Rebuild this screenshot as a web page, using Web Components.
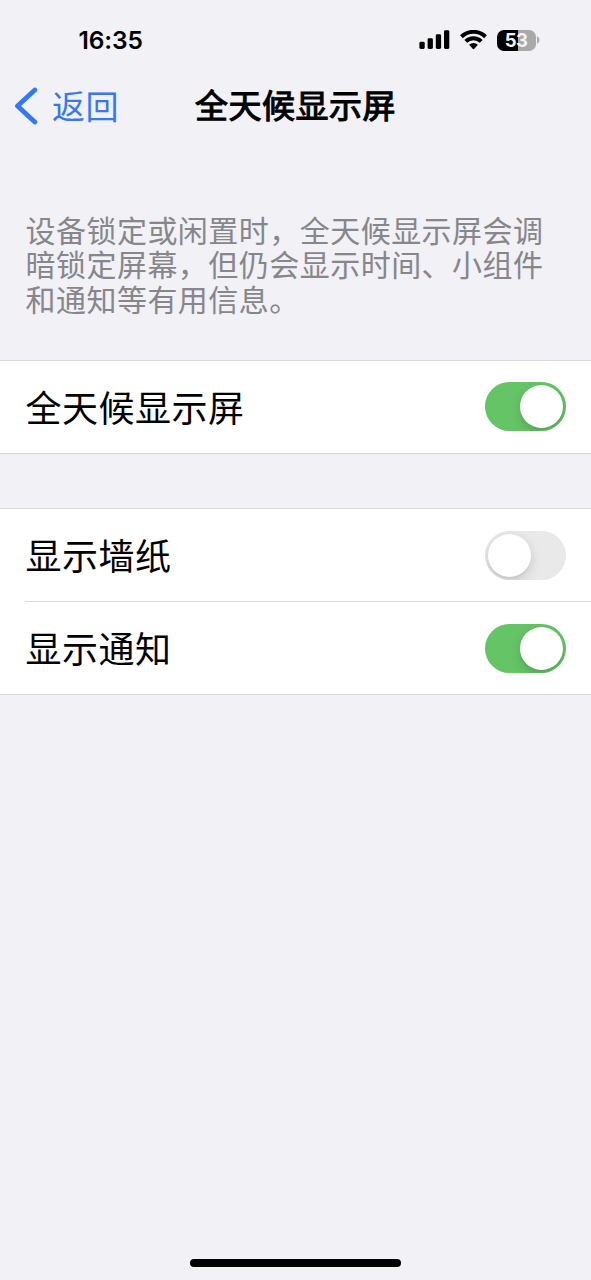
<!DOCTYPE html>
<html lang="zh-CN">
<head>
<meta charset="utf-8">
<title>全天候显示屏</title>
<style>
html, body { margin: 0; height: 100%; background: #f1f1f6; }
body { overflow: hidden; font-family: Inter, "Noto Sans CJK SC", sans-serif; }
</style>
</head>
<body>
<settings-page>
  <status-bar time="16:35" level="53"></status-bar>
  <nav-bar back="返回">全天候显示屏</nav-bar>
  <section-note>设备锁定或闲置时，全天候显示屏会调
暗锁定屏幕，但仍会显示时间、小组件
和通知等有用信息。</section-note>
  <cell-group><setting-cell on>全天候显示屏</setting-cell></cell-group>
  <cell-group><setting-cell>显示墙纸</setting-cell><setting-cell on>显示通知</setting-cell></cell-group>
  <home-indicator slot="bottom"></home-indicator>
</settings-page>
<script>
const define = (name, render) => customElements.define(name, class extends HTMLElement {
  connectedCallback() {
    if (!this.shadowRoot) this.attachShadow({ mode: 'open' }).innerHTML = render(this);
  }
});

define('settings-page', () => `
<style>
:host { display: flex; flex-direction: column; width: 591px; height: 1280px; background: #f1f1f6; }
main { flex: 1; }
</style>
<main><slot></slot></main><slot name="bottom"></slot>`);

define('status-bar', el => `
<style>
:host { display: flex; box-sizing: border-box; height: 80px; padding: 0 51px 0 78.5px; justify-content: space-between; align-items: center; color: #000; }
time { font: 600 24.5px/30px Inter, sans-serif; letter-spacing: -.1px; margin-top: -1px; }
.icons { display: flex; align-items: center; }
.signal { margin-right: 10px; }
.wifi { margin-right: 10px; }
.battery { box-sizing: border-box; width: 39px; height: 21px; border-radius: 7px; background: linear-gradient(90deg, #000 21px, #a9a9ac 21px); color: #f4f4f4; font: 700 18.5px/21px Inter, sans-serif; text-align: center; letter-spacing: -.6px; }
.cap { margin-left: 1.5px; }
svg { display: block; }
</style>
<time>${el.getAttribute('time')}</time>
<div class="icons">
  <svg class="signal" width="31" height="20" viewBox="0 0 31 20"><rect x=".4" y="11.8" width="5.300" height="7.200" rx="1.4"/><rect x="8.600" y="8.300" width="5.300" height="10.700" rx="1.4"/><rect x="16.800" y="4.300" width="5.300" height="14.700" rx="1.4"/><rect x="25" y=".2" width="5.300" height="18.800" rx="1.4"/></svg>
  <svg class="wifi" width="27" height="20" viewBox="0 0 27 20"><g fill="none" stroke="#000" stroke-width="4"><path d="M1.500 6.700a17.200 17.200 0 0 1 24 0"/><path d="M5.800 11.400a11 11 0 0 1 15.400 0"/></g><path d="M9.100 14.800a6.300 6.300 0 0 1 8.800 0l-3.600 4q-.8.8-1.600 0z"/></svg>
  <div class="battery">${el.getAttribute('level')}</div>
  <svg class="cap" width="3" height="8" viewBox="0 0 3 8"><path d="M0 0q2.500 1.300 2.500 4t-2.500 4z" fill="#a9a9ac"/></svg>
</div>`);

define('nav-bar', el => `
<style>
:host { display: grid; grid-template-columns: 181px 1fr 181px; height: 52px; align-items: center; }
.back { display: flex; align-items: center; color: #3478f6; font: 400 33px/48px "Noto Sans CJK SC", sans-serif; letter-spacing: .5px; padding-left: 14px; }
.back span { margin-top: -3px; }
svg { margin-right: 14px; }
h1 { margin: -4px 0 0; text-align: center; white-space: nowrap; color: #000; font: 400 33px/48px "Noto Sans CJK SC", sans-serif; letter-spacing: .500px; -webkit-text-stroke: 1.100px #000; }
</style>
<div class="back"><svg width="24" height="38" viewBox="0 0 24 38"><path d="M20.800 3 3.500 19 20.800 35" fill="none" stroke="currentColor" stroke-width="4.800" stroke-linecap="round" stroke-linejoin="round"/></svg><span>${el.getAttribute('back')}</span></div>
<h1><slot></slot></h1>`);

define('section-note', () => `
<style>
:host { display: block; box-sizing: border-box; height: 228px; padding: 79.500px 0 0 25.500px; color: #86868b; font: 400 30px/34.600px "Noto Sans CJK SC", sans-serif; letter-spacing: .470px; }
p { margin: 0; white-space: pre; }
</style><p><slot></slot></p>`);

define('cell-group', () => `
<style>
:host { display: block; background: #fff; border: solid #d9d9dc; border-width: 1px 0; margin-bottom: 54px; }
::slotted(:not(:first-child)) { --rule: #d9d9dc; }
</style><slot></slot>`);

define('setting-cell', el => `
<style>
:host { display: block; padding-left: 25px; }
.row { display: flex; box-sizing: border-box; height: 92px; align-items: center; justify-content: space-between; padding-right: 25px; color: #000; font: 400 36px/52px "Noto Sans CJK SC", sans-serif; letter-spacing: .500px; }
.row span { margin: -3px 0 0 .6px; }
:host(:only-child) toggle-switch { margin-top: -1px; }
:host(:not(:first-child)) .row { height: 93px; border-top: 1px solid var(--rule); }
</style>
<div class="row"><span><slot></slot></span><toggle-switch ${el.hasAttribute('on') ? 'on' : ''}></toggle-switch></div>`);

define('toggle-switch', () => `
<style>
:host { display: flex; box-sizing: border-box; width: 81px; height: 49px; padding: 3px; border-radius: 25px; background: #e9e9ea; overflow: hidden; }
:host([on]) { justify-content: flex-end; background: #65c466; }
i { width: 43px; height: 43px; border-radius: 50%; background: #fff; box-shadow: 0 4px 11px rgba(0,0,0,.15), 0 2px 2px rgba(0,0,0,.04); }
</style><i></i>`);

define('home-indicator', () => `
<style>
:host { display: flex; justify-content: center; height: 21px; }
i { width: 211px; height: 8px; border-radius: 4px; background: #000; }
</style><i></i>`);
</script>
</body>
</html>
